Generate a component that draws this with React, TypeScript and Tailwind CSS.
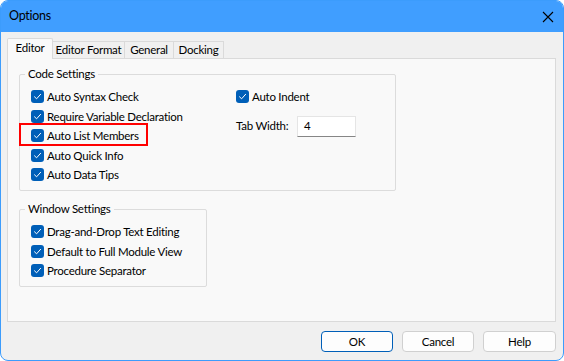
import React from 'react';

const font = { fontFamily: 'Lato, "Noto Sans", sans-serif' };

const Check: React.FC = () => (
  <span className="flex h-[13px] w-[13px] shrink-0 items-center justify-center rounded-[3px] bg-[#005fb8]">
    <svg width="9" height="9" viewBox="0 0 9 9" fill="none">
      <path d="M1.5 4.8 L3.6 6.8 L7.6 2.3" stroke="#ffffff" strokeWidth="1" strokeLinecap="round" strokeLinejoin="round" />
    </svg>
  </span>
);

const CheckRow: React.FC<{ label: string }> = ({ label }) => (
  <div className="flex h-[19.5px] items-center gap-[3px] whitespace-nowrap">
    <Check />
    <span>{label}</span>
  </div>
);

const GroupBox: React.FC<{ title: string; className: string; children: React.ReactNode }> = ({ title, className, children }) => (
  <div className={`relative rounded-[2px] border border-[#dcdcdc] ${className}`}>
    <span className="absolute -top-[9px] left-[5px] bg-[#f9f9f9] px-[3px] leading-[16px]">{title}</span>
    {children}
  </div>
);

const tabs = [
  { label: 'Editor Format', w: 'w-[72px]' },
  { label: 'General', w: 'w-[49px]' },
  { label: 'Docking', w: 'w-[50px]' },
];

export default function App() {
  return (
    <div
      className="flex h-[361px] w-[564px] flex-col overflow-hidden rounded-lg border border-[#3c9cfc] bg-[#f0f0f0] text-[11.5px] tracking-[-0.25px] text-black"
      style={font}
    >
      {/* title bar */}
      <div className="flex h-[31px] shrink-0 items-center justify-between bg-[#409eff] pl-[8px] pr-[9px]">
        <span className="text-[12.5px]">Options</span>
        <svg width="12" height="12" viewBox="0 0 12 12">
          <path d="M1 1 L11 11 M11 1 L1 11" stroke="#000" strokeWidth="1.1" />
        </svg>
      </div>

      <div className="flex flex-1 flex-col px-[6px] pt-[6px]">
        {/* tabs */}
        <div className="relative z-10 flex h-[20px]">
          <div className="flex h-[21px] w-[46px] items-center justify-center self-start rounded-t-[2px] border border-b-0 border-[#dadada] bg-[#f9f9f9] pb-[2px]">
            Editor
          </div>
          {tabs.map((t) => (
            <div
              key={t.label}
              className={`flex h-[17px] items-center justify-center self-end whitespace-nowrap border border-b-0 border-l-0 border-[#dadada] bg-[#f0f0f0] ${t.w}`}
            >
              {t.label}
            </div>
          ))}
        </div>

        {/* panel */}
        <div className="h-[264px] w-[549px] border border-[#dadada] bg-[#f9f9f9] pl-[11px] pt-[15px]">
          <GroupBox title="Code Settings" className="flex h-[117px] w-[377px] pl-[11px] pt-[12px]">
            <div className="w-[205px]">
              <CheckRow label="Auto Syntax Check" />
              <CheckRow label="Require Variable Declaration" />
              <div className="relative">
                <span className="absolute -left-[12px] -top-[3px] h-[23px] w-[129px] border-2 border-[#ff0000]" />
                <CheckRow label="Auto List Members" />
              </div>
              <CheckRow label="Auto Quick Info" />
              <CheckRow label="Auto Data Tips" />
            </div>
            <div>
              <CheckRow label="Auto Indent" />
              <div className="mt-[9px] flex items-center">
                <span className="w-[61px]">Tab Width:</span>
                <div className="flex h-[21px] w-[59px] items-center border border-[#e5e5e5] border-b-[#868686] bg-white pl-[6px]">
                  4
                </div>
              </div>
            </div>
          </GroupBox>

          <GroupBox title="Window Settings" className="mt-[18px] h-[78px] w-[188px] pl-[11px] pt-[12px]">
            <CheckRow label="Drag-and-Drop Text Editing" />
            <CheckRow label="Default to Full Module View" />
            <CheckRow label="Procedure Separator" />
          </GroupBox>
        </div>

        {/* buttons */}
        <div className="mt-[9px] flex justify-end gap-[9px] pr-[1px]">
          <button className="h-[21px] w-[72px] rounded-[4px] border border-[#005fb8] bg-[#fdfdfd]">OK</button>
          <button className="h-[21px] w-[72px] rounded-[4px] border border-[#d0d0d0] bg-[#fdfdfd]">Cancel</button>
          <button className="h-[21px] w-[73px] rounded-[4px] border border-[#d0d0d0] bg-[#fdfdfd]">Help</button>
        </div>
      </div>
    </div>
  );
}
